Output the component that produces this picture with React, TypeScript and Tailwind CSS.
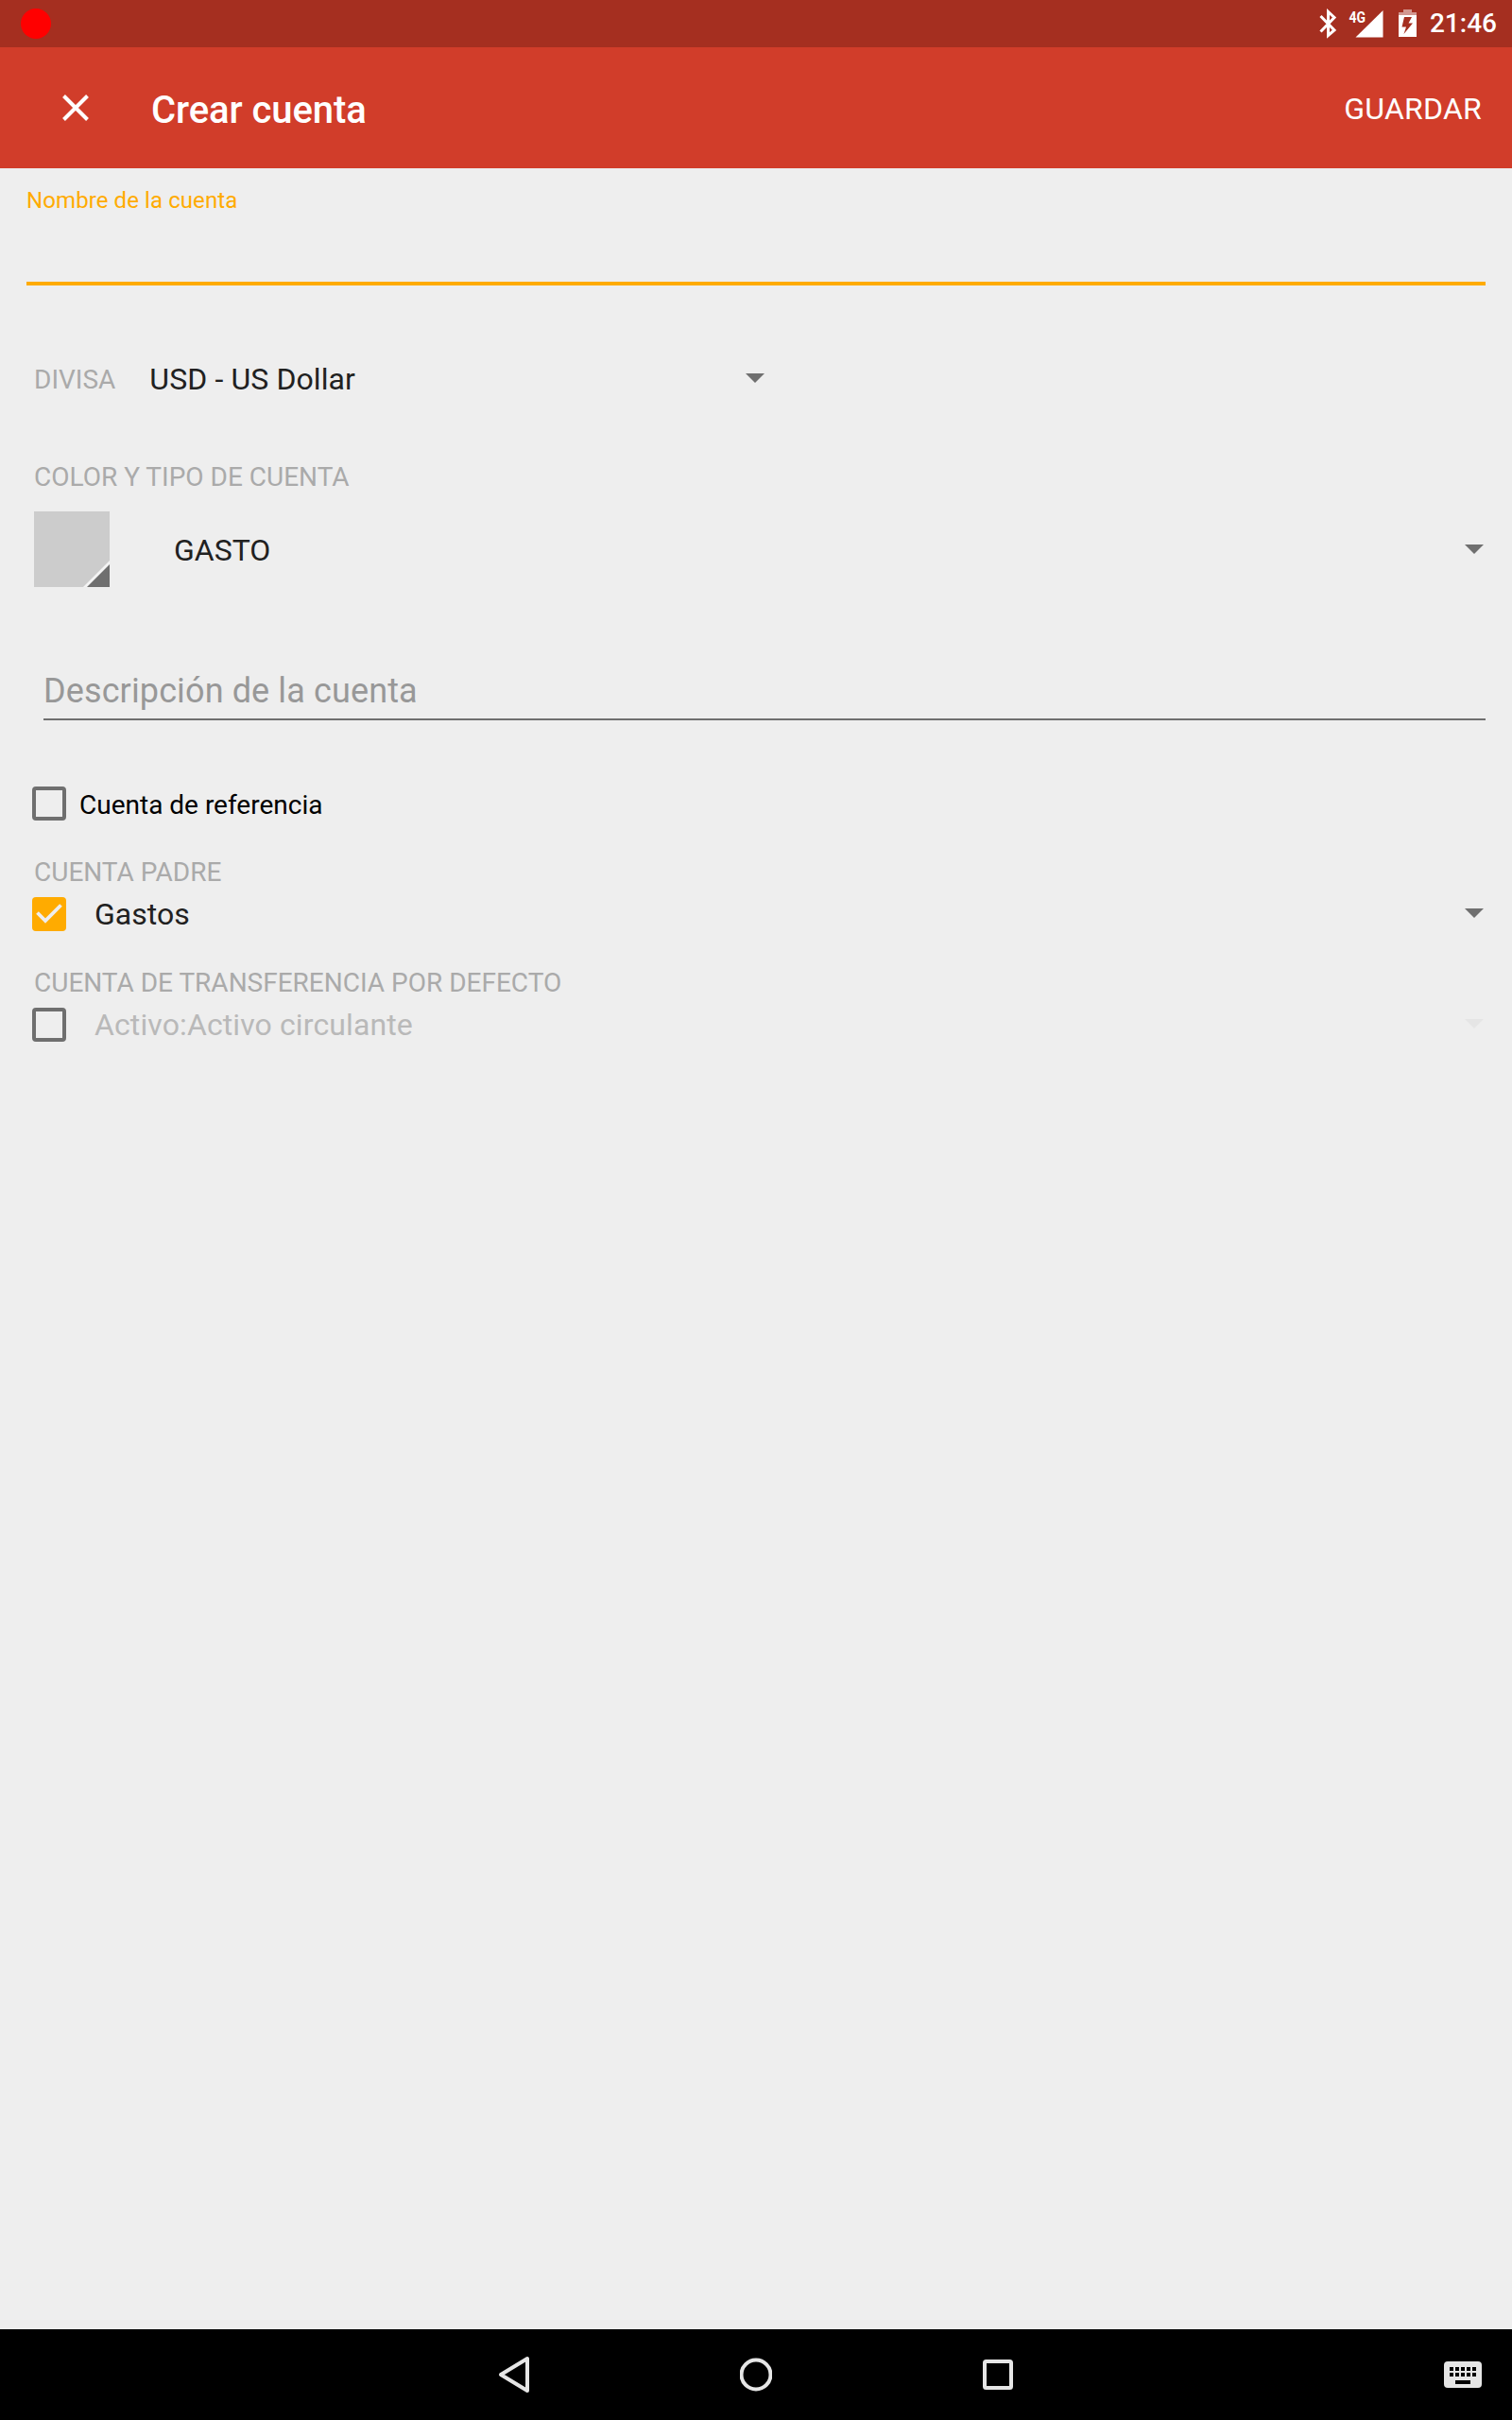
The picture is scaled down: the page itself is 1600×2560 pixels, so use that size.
import React from "react";

function Arrow({ color = "#6f6f6f" }: { color?: string }) {
  return (
    <svg width="20" height="10" viewBox="0 0 20 10" className="shrink-0">
      <path d="M0 0H20L10 10Z" fill={color} />
    </svg>
  );
}

function Checkbox({ checked = false }: { checked?: boolean }) {
  return (
    <svg width="36" height="36" viewBox="0 0 36 36" className="shrink-0">
      {checked ? (
        <>
          <rect width="36" height="36" rx="4" fill="#ffab00" />
          <path d="M5.500 16.500L14 25L30.500 8.500" fill="none" stroke="#eeeeee" strokeWidth="3.8" />
        </>
      ) : (
        <rect x="2" y="2" width="32" height="32" rx="2" fill="none" stroke="#6f6f6f" strokeWidth="4" />
      )}
    </svg>
  );
}

function StatusBar() {
  return (
    <div className="flex h-[50px] items-center bg-[#a52f20] pr-[16px] pl-[22px] text-white">
      <div className="h-8 w-8 rounded-full bg-[#ff0000]" />
      <svg width="104" height="50" viewBox="1396 0 104 50" className="ml-auto">
        <path d="M1397.500 17L1412 32L1405.500 37.500V12.500L1412 18.500L1397.500 33.500" fill="none" stroke="#fff" strokeWidth="3" />
        <path d="M1463.500 11V39.500H1434.500Z" fill="#fff" />
        <text x="1427.500" y="24" fontSize="16" fontWeight="700" fill="#fff" textLength="17.500" lengthAdjust="spacingAndGlyphs">4G</text>
        <path d="M1485 10H1494V13H1499V16H1480V13H1485Z" fill="#fff" fillOpacity=".5" />
        <path d="M1480 16H1499V39H1480ZM1486 18L1483.500 28.500H1488L1485.500 36L1495 24.500H1490.500L1494 18Z" fill="#fff" fillRule="evenodd" />
      </svg>
      <span className="ml-[13px] text-[28px] leading-[32px] font-medium">21:46</span>
    </div>
  );
}

function NavBar() {
  return (
    <div className="flex h-24 items-center justify-between bg-black pr-8 pl-[527px]">
      <div className="flex items-center gap-[222px]">
        <svg width="34" height="40" viewBox="0 0 34 40" fill="none" stroke="#e6e6e6" strokeWidth="4" strokeLinejoin="round">
          <path d="M31 3V37L3 20Z" />
        </svg>
        <svg width="34" height="36" viewBox="0 0 34 36" fill="none" stroke="#e6e6e6" strokeWidth="4">
          <circle cx="17" cy="18" r="15.500" />
        </svg>
        <svg width="32" height="32" viewBox="0 0 32 32" fill="none" stroke="#e6e6e6" strokeWidth="4" className="ml-px">
          <rect x="2" y="2" width="28" height="28" rx="1.500" />
        </svg>
      </div>
      <svg width="40" height="28" viewBox="0 0 40 28">
        <rect width="40" height="28" rx="4" fill="#e6e6e6" />
        {[6, 12].map((y) =>
          [6, 12, 18, 24, 30].map((x) => <rect key={`${x}-${y}`} x={x} y={y} width="4" height="4" fill="#000" />)
        )}
        <rect x="12" y="20" width="16" height="4" fill="#000" />
      </svg>
    </div>
  );
}

const label = "pt-px text-[28px] leading-[31px] text-[#aaaaaa]";

export default function App() {
  return (
    <div className="flex h-[2560px] w-[1600px] flex-col bg-[#eeeeee] font-['Roboto',sans-serif] whitespace-nowrap text-[#212121]">
      <StatusBar />
      <header className="flex h-32 items-center bg-[#d13d2a] pr-8 pl-[66px] text-white">
        <svg width="28" height="28" viewBox="0 0 28 28" stroke="#fff" strokeWidth="4">
          <path d="M1.500 1.500L26.500 26.500M26.500 1.500L1.500 26.500" />
        </svg>
        <h1 className="mt-[5px] ml-[66px] text-[40px] leading-[48px] font-medium tracking-[-0.08px]">Crear cuenta</h1>
        <button className="mt-[2px] ml-auto text-[32px] leading-[40px] tracking-[0.25px]">GUARDAR</button>
      </header>

      <main className="flex flex-1 flex-col pt-[18px] pr-7">
        <div className="ml-7 h-[106px] border-b-4 border-[#ffab00] text-[24px] leading-[32px] tracking-[0.09px] text-[#ffab00]">
          Nombre de la cuenta
        </div>

        <div className="mt-[79px] flex h-10 items-center pl-9">
          <span className={label}>DIVISA</span>
          <div className="ml-[36px] flex w-[651px] items-center justify-between text-[32px]">
            <span className="tracking-[0.1px]">USD - US Dollar</span>
            <div className="pb-[3px]">
              <Arrow />
            </div>
          </div>
        </div>

        <div className="mt-[67px] ml-9">
          <div className="pt-[2px] text-[28px] leading-[30px] text-[#aaaaaa]">COLOR Y TIPO DE CUENTA</div>
        </div>
        <div className="mt-[21px] flex h-20 items-center pl-9">
          <svg width="80" height="80" viewBox="0 0 80 80">
            <rect width="80" height="80" fill="#cccccc" />
            <path d="M80 52V80H52Z" fill="#f4f4f4" />
            <path d="M80 56V80H56Z" fill="#6f6f6f" />
          </svg>
          <div className="ml-[68px] flex flex-1 items-center justify-between pr-[2px] text-[32px]">
            <span className="pt-[2px]">GASTO</span>
            <Arrow />
          </div>
        </div>

        <div className="mt-[88px] ml-[46px] h-[53px] border-b-2 border-[#6f6f6f] text-[36px] leading-[44px] tracking-[0.12px] text-[#989898]">
          Descripción de la cuenta
        </div>

        <div className="mt-[70px] flex h-9 items-center pl-[34px] text-black">
          <Checkbox />
          <span className="mt-[4px] ml-[14px] text-[28px] leading-[32px]">Cuenta de referencia</span>
        </div>

        <div className="mt-[38px] ml-9">
          <div className="pt-[2px] text-[28px] leading-[30px] text-[#aaaaaa]">CUENTA PADRE</div>
        </div>
        <div className="mt-[11px] flex h-9 items-center pr-[2px] pl-[34px]">
          <Checkbox checked />
          <span className="mr-auto ml-[30px] text-[32px]">Gastos</span>
          <div className="pb-[3px]">
            <Arrow />
          </div>
        </div>

        <div className="mt-[38px] ml-9">
          <div className="pt-[2px] text-[28px] leading-[30px] text-[#aaaaaa]">CUENTA DE TRANSFERENCIA POR DEFECTO</div>
        </div>
        <div className="mt-[11px] flex h-9 items-center pr-[2px] pl-[34px]">
          <Checkbox />
          <span className="mr-auto ml-[30px] text-[32px] tracking-[0.11px] text-[#b9b9b9]">Activo:Activo circulante</span>
          <div className="pb-[3px]">
            <Arrow color="#e5e5e5" />
          </div>
        </div>
      </main>
      <NavBar />
    </div>
  );
}
